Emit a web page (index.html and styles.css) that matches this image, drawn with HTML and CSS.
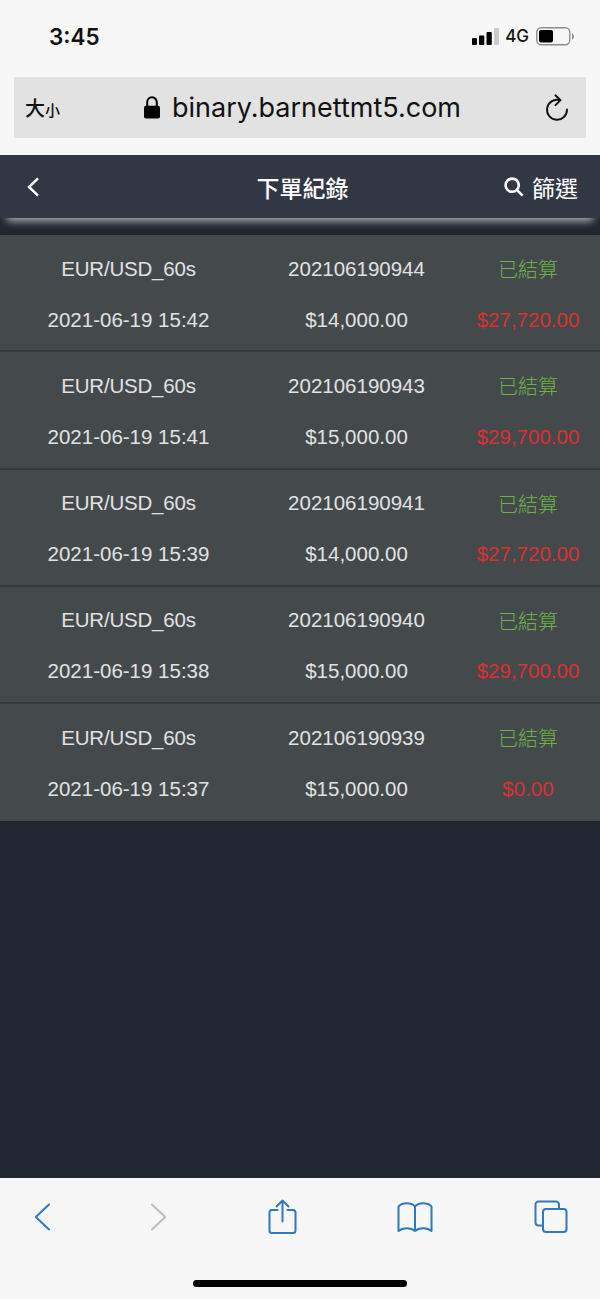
FILE: index.html
```html
<!DOCTYPE html>
<html lang="zh-Hant">
<head>
  <meta charset="UTF-8" />
  <meta name="viewport" content="width=device-width, initial-scale=1.0"/>
  <title>下單紀錄</title>
  <link rel="stylesheet" href="styles.css">
</head>
<body>
  <div class="statusbar">
    <div class="time">3:45</div>
    <svg class="signal" width="27" height="17" viewBox="0 0 27 17">
      <rect x="0" y="10" width="5" height="7" rx="1"/>
      <rect x="7" y="7.5" width="5.3" height="9.5" rx="1"/>
      <rect x="14.5" y="4" width="5.3" height="13" rx="1"/>
      <rect x="22" y="0" width="5" height="17" rx="1" fill="#cbcbcb"/>
    </svg>
    <div class="network">4G</div>
    <svg class="battery" width="39" height="19" viewBox="0 0 39 19">
      <rect x="0.8" y="0.8" width="33" height="17" rx="4.5" fill="none" stroke="#8c8c8c" stroke-width="1.4"/>
      <rect x="3" y="3" width="14" height="12.5" rx="2"/>
      <path d="M36 6.2c2.6 1 2.6 5.4 0 6.4z" fill="#8c8c8c"/>
    </svg>
  </div>

  <div class="addressbar">
    <div class="textsize">大<span class="small">小</span></div>
    <div class="url">
      <svg width="16" height="23" viewBox="0 0 16 23">
        <path d="M3.2 11V6.3a4.8 5.1 0 0 1 9.6 0V11" fill="none" stroke="#000" stroke-width="2"/>
        <rect x="0" y="9.7" width="16" height="12.8" rx="2"/>
      </svg>
      <span class="domain">binary.barnettmt5.com</span>
    </div>
    <svg class="reload" width="24" height="28" viewBox="0 0 24 28" fill="none" stroke="#111" stroke-width="1.9" stroke-linecap="round" stroke-linejoin="round">
      <path d="M14.5 6.1A10 10 0 1 0 22 15.5"/>
      <path d="M10.4 1.3l5.1 4.9-5 5"/>
    </svg>
  </div>

  <div class="header">
    <svg class="back" width="13" height="20" viewBox="0 0 13 20">
      <path d="M11 1.3L2 10l9 8.7" fill="none" stroke="#fff" stroke-width="2.5"/>
    </svg>
    <div class="title">下單紀錄</div>
    <div class="filter">
      <svg width="20" height="20" viewBox="0 0 20 20" fill="none" stroke="#fff" stroke-width="2.6">
        <circle cx="8.2" cy="8.2" r="6.6"/>
        <path d="M12.8 12.8l5.8 5.8"/>
      </svg>
      <span>篩選</span>
    </div>
  </div>

  <div class="orders">
    <div class="order">
      <div class="symbol">EUR/USD_60s</div><div>202106190944</div><div class="status">已結算</div>
      <div>2021-06-19 15:42</div><div>$14,000.00</div><div class="profit">$27,720.00</div>
    </div>
    <div class="order">
      <div class="symbol">EUR/USD_60s</div><div>202106190943</div><div class="status">已結算</div>
      <div>2021-06-19 15:41</div><div>$15,000.00</div><div class="profit">$29,700.00</div>
    </div>
    <div class="order">
      <div class="symbol">EUR/USD_60s</div><div>202106190941</div><div class="status">已結算</div>
      <div>2021-06-19 15:39</div><div>$14,000.00</div><div class="profit">$27,720.00</div>
    </div>
    <div class="order">
      <div class="symbol">EUR/USD_60s</div><div>202106190940</div><div class="status">已結算</div>
      <div>2021-06-19 15:38</div><div>$15,000.00</div><div class="profit">$29,700.00</div>
    </div>
    <div class="order">
      <div class="symbol">EUR/USD_60s</div><div>202106190939</div><div class="status">已結算</div>
      <div>2021-06-19 15:37</div><div>$15,000.00</div><div class="profit">$0.00</div>
    </div>
  </div>

  <div class="bottom">
    <div class="toolbar">
      <svg width="16" height="28" viewBox="0 0 16 28"><path d="M15 1.5L1.8 14 15 26.5"/></svg>
      <svg class="disabled" width="16" height="28" viewBox="0 0 16 28"><path d="M1 1.5L14.2 14 1 26.5"/></svg>
      <svg width="29" height="36" viewBox="0 0 29 36">
        <path d="M9.5 11H4a2.5 2.5 0 0 0-2.5 2.5v18A2.5 2.5 0 0 0 4 34h21a2.5 2.5 0 0 0 2.5-2.5v-18A2.5 2.5 0 0 0 25 11h-5.500"/>
        <path d="M14.500 22.500V1.500M8.500 7.500l6-6 6 6"/>
      </svg>
      <svg width="36" height="31" viewBox="0 0 36 31">
        <path d="M18 4.500C14 .3 5.500 .3 1.500 4.500V29c4-3.700 12.500-3.700 16.500 0 4-3.700 12.500-3.700 16.500 0V4.500C30.500 .3 22 .3 18 4.500zV29"/>
      </svg>
      <svg width="34" height="34" viewBox="0 0 34 34">
        <path d="M8.500 25.500H4.500a3 3 0 0 1-3-3v-18a3 3 0 0 1 3-3h17.500a3 3 0 0 1 3 3v4"/>
        <rect x="9" y="9" width="23.500" height="23" rx="3"/>
      </svg>
    </div>
    <div class="home"></div>
  </div>
</body>
</html>
```
FILE: styles.css
```css
* {
  box-sizing: border-box;
}
body {
  margin: 0;
  width: 600px;
  height: 1299px;
  display: flex;
  flex-direction: column;
  overflow: hidden;
  background: #212731;
  font-family: "Liberation Sans", "Noto Sans CJK TC", sans-serif;
}
svg {
  display: block;
  flex: none;
}
.statusbar {
  height: 77px;
  padding: 0 25px 5px 49px;
  display: flex;
  align-items: center;
  background: #f7f7f7;
  font-family: Inter, sans-serif;
  color: #111;
}
.time {
  flex: 1;
  font-size: 22.5px;
  font-weight: 600;
}
.network {
  margin: 0 7px 0 6px;
  font-size: 17px;
  font-weight: 500;
}
.addressbar {
  height: 78px;
  flex: none;
  display: flex;
  align-items: center;
  padding: 0 17px 0 11px;
  background: #e2e2e2;
  border: solid #f7f7f7;
  border-width: 0 14px 17px;
  border-radius: 0;
  position: relative;
}
.textsize {
  width: 119px;
  font: 500 20px "Noto Sans CJK TC", sans-serif;
  color: #111;
}
.small {
  font-size: 15px;
}
.url {
  flex: 1;
  display: flex;
  align-items: center;
  gap: 12px;
}
.domain {
  font: 27px Inter, sans-serif;
  color: #111;
  white-space: nowrap;
}
.header {
  height: 63px;
  flex: none;
  display: grid;
  grid-template-columns: 120px 1fr 120px;
  align-items: center;
  padding: 0 22px 0 27px;
  background: #323746;
  color: #fff;
  box-shadow: 0 10px 8px -7px #b0b1b8;
}
.title {
  text-align: center;
  font-size: 23px;
  font-weight: 500;
}
.filter {
  display: flex;
  align-items: center;
  justify-content: flex-end;
  gap: 8px;
  font-size: 23px;
}
.orders {
  margin-top: 17px;
}
.order {
  height: 117.3px;
  display: grid;
  grid-template-columns: 257px 199px 144px;
  grid-auto-rows: 51px;
  padding-top: 8px;
  align-items: center;
  text-align: center;
  background: #444a4c;
  border-bottom: 2px solid #343a3d;
  color: #e1e1e5;
  font-size: 20.5px;
}
.order:last-child {
  border-bottom: none;
}
.symbol {
  letter-spacing: -0.2px;
}
.status {
  color: #6cb344;
  font-family: "Noto Sans CJK TC", sans-serif;
  font-weight: 300;
  font-size: 20px;
}
.profit {
  color: #dc3030;
}
.bottom {
  margin-top: auto;
  height: 121px;
  background: #f7f7f7;
}
.toolbar {
  height: 78px;
  display: flex;
  align-items: center;
  justify-content: space-between;
  padding: 0 32px 0 34px;
  fill: none;
  stroke: #2f79bd;
  stroke-width: 2;
  stroke-linecap: round;
  stroke-linejoin: round;
}
.disabled {
  stroke: #bdbdbd;
}
.home {
  width: 214px;
  height: 7px;
  margin: 24px auto 0;
  border-radius: 4px;
  background: #000;
}
```
